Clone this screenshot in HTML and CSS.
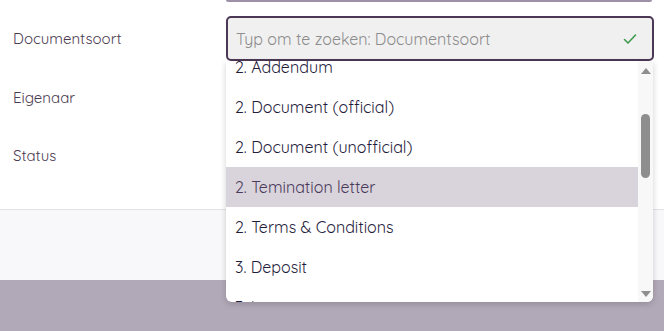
FILE: index.html
```html
<!DOCTYPE html>
<html>
<head>
<meta charset="utf-8">
<link rel="stylesheet" href="styles.css">
</head>
<body>
<div class="page">
  <div class="form">
    <div class="prev-row">
      <div class="prev-input"></div>
    </div>
    <div class="row first">
      <div class="label">Documentsoort</div>
      <div class="field">
        <div class="select">
          <span class="placeholder">Typ om te zoeken: Documentsoort</span>
          <svg class="check" width="14" height="12" viewBox="0 0 14 12"><path d="M1.5 6.5 L5 10 L12.5 2" fill="none" stroke="#3d9a4e" stroke-width="1.6" stroke-linecap="round" stroke-linejoin="round"/></svg>
        </div>
        <div class="dropdown">
          <div class="list">
            <div class="items">
              <div class="item">2. Addendum</div>
              <div class="item">2. Document (official)</div>
              <div class="item">2. Document (unofficial)</div>
              <div class="item active">2. Temination letter</div>
              <div class="item">2. Terms &amp; Conditions</div>
              <div class="item">3. Deposit</div>
              <div class="item">3. Invoice</div>
            </div>
          </div>
          <div class="scrollbar">
            <span class="arrow up"></span>
            <div class="track"><div class="thumb"></div></div>
            <span class="arrow down"></span>
          </div>
        </div>
      </div>
    </div>
    <div class="row">
      <div class="label">Eigenaar</div>
      <div class="field"></div>
    </div>
    <div class="row">
      <div class="label">Status</div>
      <div class="field"></div>
    </div>
  </div>
  <div class="footer"></div>
  <div class="overlay"></div>
</div>
</body>
</html>
```
FILE: styles.css
```css
* { box-sizing: border-box; }
html, body { margin: 0; padding: 0; }
body {
  width: 664px;
  height: 331px;
  overflow: hidden;
  font-family: "Quicksand", "Lato", "Noto Sans", sans-serif;
  background: #ffffff;
}
.page { display: flex; flex-direction: column; height: 331px; }
.form { background: #fff; padding: 0 0 25px 13px; }
.prev-row { padding-left: 213px; margin-bottom: 7px; }
.prev-input { height: 2px; width: 426px; background: #9c91a7; border-radius: 0 0 2px 2px; }
.row {
  display: flex;
  height: 58px;
  align-items: center;
}
.row.first { height: 59px; }
.label {
  width: 213px;
  font-size: 15px;
  color: #4a3a50;
}
.field { position: relative; width: 428px; }
.select {
  height: 45px;
  border: 2px solid #4b3855;
  border-radius: 5px;
  background: #f0f0f0;
  display: flex;
  align-items: center;
  justify-content: space-between;
  padding: 0 15px 0 8px;
}
.placeholder { font-size: 16px; color: #8c8c8c; }
.check { display: block; }
.dropdown {
  position: absolute;
  left: 0;
  top: 45px;
  width: 427px;
  height: 241px;
  background: #fff;
  border-radius: 0 0 6px 6px;
  box-shadow: 0 2px 6px rgba(0,0,0,0.18);
  display: flex;
  overflow: hidden;
  z-index: 5;
}
.list { flex: 1; overflow: hidden; }
.items { margin-top: -14px; }
.item {
  height: 40px;
  display: flex;
  align-items: center;
  padding-left: 9px;
  font-size: 16px;
  color: #1f1d3d;
}
.item.active { background: #d9d3dc; color: #4a3a5a; }
.scrollbar {
  width: 15px;
  background: #f8f8f8;
  display: flex;
  flex-direction: column;
  align-items: center;
  padding: 7px 0 5px;
}
.arrow { width: 0; height: 0; border-left: 5px solid transparent; border-right: 5px solid transparent; }
.arrow.up { border-bottom: 6px solid #8e8e8e; }
.arrow.down { border-top: 6px solid #8e8e8e; }
.track { flex: 1; width: 100%; display: flex; justify-content: center; padding-top: 40px; }
.thumb { width: 9px; height: 64px; background: #8e8e8e; border-radius: 5px; }
.footer {
  height: 71px;
  background: #f8f8fa;
  border-top: 1px solid #e4e1e8;
}
.overlay { flex: 1; background: #b2a9b8; }
```
